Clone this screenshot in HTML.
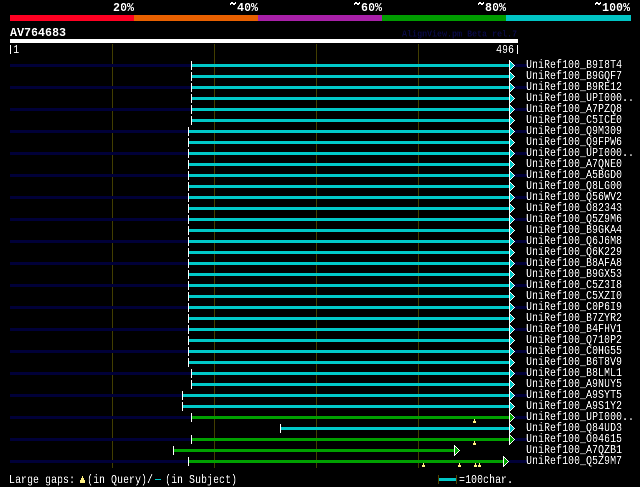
<!DOCTYPE html>
<html><head><meta charset="utf-8"><style>
html,body{margin:0;padding:0;background:#000;width:640px;height:487px;overflow:hidden}
svg{position:absolute;left:0;top:0}
.r,.b,.nv{position:absolute;white-space:pre;font-family:"Liberation Mono",monospace;color:#fff;line-height:24px;transform-origin:0 0;will-change:transform}
.r{font-size:24px;transform:scale(0.41667,0.5)}
.b{font-size:24px;font-weight:bold;transform:scale(0.48611,0.5)}
.nv{font-size:18px;font-weight:bold;color:#0a0a44;transform:scale(0.463,0.5)}
</style></head><body>
<svg width="640" height="487" shape-rendering="crispEdges">
<rect x="10" y="15" width="124" height="6" fill="#ff0022"/>
<rect x="134" y="15" width="124" height="6" fill="#e86000"/>
<rect x="258" y="15" width="124" height="6" fill="#a820a8"/>
<rect x="382" y="15" width="124" height="6" fill="#009c00"/>
<rect x="506" y="15" width="125" height="6" fill="#00c4c4"/>
<rect x="10" y="39" width="508" height="4" fill="#fff"/>
<rect x="112" y="44" width="1" height="424" fill="#423e00"/>
<rect x="214" y="44" width="1" height="424" fill="#423e00"/>
<rect x="316" y="44" width="1" height="424" fill="#423e00"/>
<rect x="418" y="44" width="1" height="424" fill="#423e00"/>
<rect x="10" y="64" width="517" height="3" fill="#000038"/>
<rect x="10" y="86" width="517" height="3" fill="#000038"/>
<rect x="10" y="108" width="517" height="3" fill="#000038"/>
<rect x="10" y="130" width="517" height="3" fill="#000038"/>
<rect x="10" y="152" width="517" height="3" fill="#000038"/>
<rect x="10" y="174" width="517" height="3" fill="#000038"/>
<rect x="10" y="196" width="517" height="3" fill="#000038"/>
<rect x="10" y="218" width="517" height="3" fill="#000038"/>
<rect x="10" y="240" width="517" height="3" fill="#000038"/>
<rect x="10" y="262" width="517" height="3" fill="#000038"/>
<rect x="10" y="284" width="517" height="3" fill="#000038"/>
<rect x="10" y="306" width="517" height="3" fill="#000038"/>
<rect x="10" y="328" width="517" height="3" fill="#000038"/>
<rect x="10" y="350" width="517" height="3" fill="#000038"/>
<rect x="10" y="372" width="517" height="3" fill="#000038"/>
<rect x="10" y="394" width="517" height="3" fill="#000038"/>
<rect x="10" y="416" width="517" height="3" fill="#000038"/>
<rect x="10" y="438" width="517" height="3" fill="#000038"/>
<rect x="10" y="460" width="517" height="3" fill="#000038"/>
<rect x="192" y="64" width="317" height="3" fill="#00c8c8"/>
<rect x="191" y="61" width="1" height="9" fill="#fff"/>
<path d="M509.5 60.5 L514.5 65.5 L509.5 70.5 Z" fill="#00c8c8" stroke="#fff" stroke-width="1"/>
<rect x="192" y="75" width="317" height="3" fill="#00c8c8"/>
<rect x="191" y="72" width="1" height="9" fill="#fff"/>
<path d="M509.5 71.5 L514.5 76.5 L509.5 81.5 Z" fill="#00c8c8" stroke="#fff" stroke-width="1"/>
<rect x="192" y="86" width="317" height="3" fill="#00c8c8"/>
<rect x="191" y="83" width="1" height="9" fill="#fff"/>
<path d="M509.5 82.5 L514.5 87.5 L509.5 92.5 Z" fill="#00c8c8" stroke="#fff" stroke-width="1"/>
<rect x="192" y="97" width="317" height="3" fill="#00c8c8"/>
<rect x="191" y="94" width="1" height="9" fill="#fff"/>
<path d="M509.5 93.5 L514.5 98.5 L509.5 103.5 Z" fill="#00c8c8" stroke="#fff" stroke-width="1"/>
<rect x="192" y="108" width="317" height="3" fill="#00c8c8"/>
<rect x="191" y="105" width="1" height="9" fill="#fff"/>
<path d="M509.5 104.5 L514.5 109.5 L509.5 114.5 Z" fill="#00c8c8" stroke="#fff" stroke-width="1"/>
<rect x="192" y="119" width="317" height="3" fill="#00c8c8"/>
<rect x="191" y="116" width="1" height="9" fill="#fff"/>
<path d="M509.5 115.5 L514.5 120.5 L509.5 125.5 Z" fill="#00c8c8" stroke="#fff" stroke-width="1"/>
<rect x="189" y="130" width="320" height="3" fill="#00c8c8"/>
<rect x="188" y="127" width="1" height="9" fill="#fff"/>
<path d="M509.5 126.5 L514.5 131.5 L509.5 136.5 Z" fill="#00c8c8" stroke="#fff" stroke-width="1"/>
<rect x="189" y="141" width="320" height="3" fill="#00c8c8"/>
<rect x="188" y="138" width="1" height="9" fill="#fff"/>
<path d="M509.5 137.5 L514.5 142.5 L509.5 147.5 Z" fill="#00c8c8" stroke="#fff" stroke-width="1"/>
<rect x="189" y="152" width="320" height="3" fill="#00c8c8"/>
<rect x="188" y="149" width="1" height="9" fill="#fff"/>
<path d="M509.5 148.5 L514.5 153.5 L509.5 158.5 Z" fill="#00c8c8" stroke="#fff" stroke-width="1"/>
<rect x="189" y="163" width="320" height="3" fill="#00c8c8"/>
<rect x="188" y="160" width="1" height="9" fill="#fff"/>
<path d="M509.5 159.5 L514.5 164.5 L509.5 169.5 Z" fill="#00c8c8" stroke="#fff" stroke-width="1"/>
<rect x="189" y="174" width="320" height="3" fill="#00c8c8"/>
<rect x="188" y="171" width="1" height="9" fill="#fff"/>
<path d="M509.5 170.5 L514.5 175.5 L509.5 180.5 Z" fill="#00c8c8" stroke="#fff" stroke-width="1"/>
<rect x="189" y="185" width="320" height="3" fill="#00c8c8"/>
<rect x="188" y="182" width="1" height="9" fill="#fff"/>
<path d="M509.5 181.5 L514.5 186.5 L509.5 191.5 Z" fill="#00c8c8" stroke="#fff" stroke-width="1"/>
<rect x="189" y="196" width="320" height="3" fill="#00c8c8"/>
<rect x="188" y="193" width="1" height="9" fill="#fff"/>
<path d="M509.5 192.5 L514.5 197.5 L509.5 202.5 Z" fill="#00c8c8" stroke="#fff" stroke-width="1"/>
<rect x="189" y="207" width="320" height="3" fill="#00c8c8"/>
<rect x="188" y="204" width="1" height="9" fill="#fff"/>
<path d="M509.5 203.5 L514.5 208.5 L509.5 213.5 Z" fill="#00c8c8" stroke="#fff" stroke-width="1"/>
<rect x="189" y="218" width="320" height="3" fill="#00c8c8"/>
<rect x="188" y="215" width="1" height="9" fill="#fff"/>
<path d="M509.5 214.5 L514.5 219.5 L509.5 224.5 Z" fill="#00c8c8" stroke="#fff" stroke-width="1"/>
<rect x="189" y="229" width="320" height="3" fill="#00c8c8"/>
<rect x="188" y="226" width="1" height="9" fill="#fff"/>
<path d="M509.5 225.5 L514.5 230.5 L509.5 235.5 Z" fill="#00c8c8" stroke="#fff" stroke-width="1"/>
<rect x="189" y="240" width="320" height="3" fill="#00c8c8"/>
<rect x="188" y="237" width="1" height="9" fill="#fff"/>
<path d="M509.5 236.5 L514.5 241.5 L509.5 246.5 Z" fill="#00c8c8" stroke="#fff" stroke-width="1"/>
<rect x="189" y="251" width="320" height="3" fill="#00c8c8"/>
<rect x="188" y="248" width="1" height="9" fill="#fff"/>
<path d="M509.5 247.5 L514.5 252.5 L509.5 257.5 Z" fill="#00c8c8" stroke="#fff" stroke-width="1"/>
<rect x="189" y="262" width="320" height="3" fill="#00c8c8"/>
<rect x="188" y="259" width="1" height="9" fill="#fff"/>
<path d="M509.5 258.5 L514.5 263.5 L509.5 268.5 Z" fill="#00c8c8" stroke="#fff" stroke-width="1"/>
<rect x="189" y="273" width="320" height="3" fill="#00c8c8"/>
<rect x="188" y="270" width="1" height="9" fill="#fff"/>
<path d="M509.5 269.5 L514.5 274.5 L509.5 279.5 Z" fill="#00c8c8" stroke="#fff" stroke-width="1"/>
<rect x="189" y="284" width="320" height="3" fill="#00c8c8"/>
<rect x="188" y="281" width="1" height="9" fill="#fff"/>
<path d="M509.5 280.5 L514.5 285.5 L509.5 290.5 Z" fill="#00c8c8" stroke="#fff" stroke-width="1"/>
<rect x="189" y="295" width="320" height="3" fill="#00c8c8"/>
<rect x="188" y="292" width="1" height="9" fill="#fff"/>
<path d="M509.5 291.5 L514.5 296.5 L509.5 301.5 Z" fill="#00c8c8" stroke="#fff" stroke-width="1"/>
<rect x="189" y="306" width="320" height="3" fill="#00c8c8"/>
<rect x="188" y="303" width="1" height="9" fill="#fff"/>
<path d="M509.5 302.5 L514.5 307.5 L509.5 312.5 Z" fill="#00c8c8" stroke="#fff" stroke-width="1"/>
<rect x="189" y="317" width="320" height="3" fill="#00c8c8"/>
<rect x="188" y="314" width="1" height="9" fill="#fff"/>
<path d="M509.5 313.5 L514.5 318.5 L509.5 323.5 Z" fill="#00c8c8" stroke="#fff" stroke-width="1"/>
<rect x="189" y="328" width="320" height="3" fill="#00c8c8"/>
<rect x="188" y="325" width="1" height="9" fill="#fff"/>
<path d="M509.5 324.5 L514.5 329.5 L509.5 334.5 Z" fill="#00c8c8" stroke="#fff" stroke-width="1"/>
<rect x="189" y="339" width="320" height="3" fill="#00c8c8"/>
<rect x="188" y="336" width="1" height="9" fill="#fff"/>
<path d="M509.5 335.5 L514.5 340.5 L509.5 345.5 Z" fill="#00c8c8" stroke="#fff" stroke-width="1"/>
<rect x="189" y="350" width="320" height="3" fill="#00c8c8"/>
<rect x="188" y="347" width="1" height="9" fill="#fff"/>
<path d="M509.5 346.5 L514.5 351.5 L509.5 356.5 Z" fill="#00c8c8" stroke="#fff" stroke-width="1"/>
<rect x="189" y="361" width="320" height="3" fill="#00c8c8"/>
<rect x="188" y="358" width="1" height="9" fill="#fff"/>
<path d="M509.5 357.5 L514.5 362.5 L509.5 367.5 Z" fill="#00c8c8" stroke="#fff" stroke-width="1"/>
<rect x="192" y="372" width="317" height="3" fill="#00c8c8"/>
<rect x="191" y="369" width="1" height="9" fill="#fff"/>
<path d="M509.5 368.5 L514.5 373.5 L509.5 378.5 Z" fill="#00c8c8" stroke="#fff" stroke-width="1"/>
<rect x="192" y="383" width="317" height="3" fill="#00c8c8"/>
<rect x="191" y="380" width="1" height="9" fill="#fff"/>
<path d="M509.5 379.5 L514.5 384.5 L509.5 389.5 Z" fill="#00c8c8" stroke="#fff" stroke-width="1"/>
<rect x="183" y="394" width="326" height="3" fill="#00c8c8"/>
<rect x="182" y="391" width="1" height="9" fill="#fff"/>
<path d="M509.5 390.5 L514.5 395.5 L509.5 400.5 Z" fill="#00c8c8" stroke="#fff" stroke-width="1"/>
<rect x="183" y="405" width="326" height="3" fill="#00c8c8"/>
<rect x="182" y="402" width="1" height="9" fill="#fff"/>
<path d="M509.5 401.5 L514.5 406.5 L509.5 411.5 Z" fill="#00c8c8" stroke="#fff" stroke-width="1"/>
<rect x="192" y="416" width="317" height="3" fill="#00a000"/>
<rect x="191" y="413" width="1" height="9" fill="#fff"/>
<path d="M509.5 412.5 L514.5 417.5 L509.5 422.5 Z" fill="#00a000" stroke="#fff" stroke-width="1"/>
<rect x="474" y="419" width="1" height="2" fill="#fff080"/><rect x="473" y="421" width="3" height="2" fill="#fff080"/>
<rect x="281" y="427" width="228" height="3" fill="#00c8c8"/>
<rect x="280" y="424" width="1" height="9" fill="#fff"/>
<path d="M509.5 423.5 L514.5 428.5 L509.5 433.5 Z" fill="#00c8c8" stroke="#fff" stroke-width="1"/>
<rect x="192" y="438" width="317" height="3" fill="#00a000"/>
<rect x="191" y="435" width="1" height="9" fill="#fff"/>
<path d="M509.5 434.5 L514.5 439.5 L509.5 444.5 Z" fill="#00a000" stroke="#fff" stroke-width="1"/>
<rect x="474" y="441" width="1" height="2" fill="#fff080"/><rect x="473" y="443" width="3" height="2" fill="#fff080"/>
<rect x="174" y="449" width="280" height="3" fill="#00a000"/>
<rect x="173" y="446" width="1" height="9" fill="#fff"/>
<path d="M454.5 445.5 L459.5 450.5 L454.5 455.5 Z" fill="#00a000" stroke="#fff" stroke-width="1"/>
<rect x="189" y="460" width="314" height="3" fill="#00a000"/>
<rect x="188" y="457" width="1" height="9" fill="#fff"/>
<path d="M503.5 456.5 L508.5 461.5 L503.5 466.5 Z" fill="#00a000" stroke="#fff" stroke-width="1"/>
<rect x="423" y="463" width="1" height="2" fill="#fff080"/><rect x="422" y="465" width="3" height="2" fill="#fff080"/>
<rect x="459" y="463" width="1" height="2" fill="#fff080"/><rect x="458" y="465" width="3" height="2" fill="#fff080"/>
<rect x="475" y="463" width="1" height="2" fill="#fff080"/><rect x="474" y="465" width="3" height="2" fill="#fff080"/>
<rect x="479" y="463" width="1" height="2" fill="#fff080"/><rect x="478" y="465" width="3" height="2" fill="#fff080"/>
<rect x="82" y="476" width="1" height="2" fill="#fff080"/><rect x="81" y="478" width="3" height="2" fill="#fff080"/><rect x="80" y="480" width="5" height="3" fill="#fff080"/>
<rect x="155" y="479" width="6" height="1" fill="#00c8c8"/>
<rect x="438" y="475" width="1" height="9" fill="#4e4200"/><rect x="456" y="475" width="1" height="9" fill="#4e4200"/>
<rect x="439" y="478" width="17" height="3" fill="#00c8c8"/>
<rect x="231" y="2" width="1" height="1" fill="#fff"/>
<rect x="232" y="2" width="1" height="1" fill="#fff"/>
<rect x="235" y="2" width="1" height="1" fill="#fff"/>
<rect x="230" y="3" width="1" height="1" fill="#fff"/>
<rect x="231" y="3" width="1" height="1" fill="#fff"/>
<rect x="232" y="3" width="1" height="1" fill="#fff"/>
<rect x="233" y="3" width="1" height="1" fill="#fff"/>
<rect x="234" y="3" width="1" height="1" fill="#fff"/>
<rect x="235" y="3" width="1" height="1" fill="#fff"/>
<rect x="230" y="4" width="1" height="1" fill="#fff"/>
<rect x="233" y="4" width="1" height="1" fill="#fff"/>
<rect x="234" y="4" width="1" height="1" fill="#fff"/>
<rect x="355" y="2" width="1" height="1" fill="#fff"/>
<rect x="356" y="2" width="1" height="1" fill="#fff"/>
<rect x="359" y="2" width="1" height="1" fill="#fff"/>
<rect x="354" y="3" width="1" height="1" fill="#fff"/>
<rect x="355" y="3" width="1" height="1" fill="#fff"/>
<rect x="356" y="3" width="1" height="1" fill="#fff"/>
<rect x="357" y="3" width="1" height="1" fill="#fff"/>
<rect x="358" y="3" width="1" height="1" fill="#fff"/>
<rect x="359" y="3" width="1" height="1" fill="#fff"/>
<rect x="354" y="4" width="1" height="1" fill="#fff"/>
<rect x="357" y="4" width="1" height="1" fill="#fff"/>
<rect x="358" y="4" width="1" height="1" fill="#fff"/>
<rect x="479" y="2" width="1" height="1" fill="#fff"/>
<rect x="480" y="2" width="1" height="1" fill="#fff"/>
<rect x="483" y="2" width="1" height="1" fill="#fff"/>
<rect x="478" y="3" width="1" height="1" fill="#fff"/>
<rect x="479" y="3" width="1" height="1" fill="#fff"/>
<rect x="480" y="3" width="1" height="1" fill="#fff"/>
<rect x="481" y="3" width="1" height="1" fill="#fff"/>
<rect x="482" y="3" width="1" height="1" fill="#fff"/>
<rect x="483" y="3" width="1" height="1" fill="#fff"/>
<rect x="478" y="4" width="1" height="1" fill="#fff"/>
<rect x="481" y="4" width="1" height="1" fill="#fff"/>
<rect x="482" y="4" width="1" height="1" fill="#fff"/>
<rect x="596" y="2" width="1" height="1" fill="#fff"/>
<rect x="597" y="2" width="1" height="1" fill="#fff"/>
<rect x="600" y="2" width="1" height="1" fill="#fff"/>
<rect x="595" y="3" width="1" height="1" fill="#fff"/>
<rect x="596" y="3" width="1" height="1" fill="#fff"/>
<rect x="597" y="3" width="1" height="1" fill="#fff"/>
<rect x="598" y="3" width="1" height="1" fill="#fff"/>
<rect x="599" y="3" width="1" height="1" fill="#fff"/>
<rect x="600" y="3" width="1" height="1" fill="#fff"/>
<rect x="595" y="4" width="1" height="1" fill="#fff"/>
<rect x="598" y="4" width="1" height="1" fill="#fff"/>
<rect x="599" y="4" width="1" height="1" fill="#fff"/>
<rect x="10" y="45" width="1" height="9" fill="#fff"/>
<rect x="517" y="45" width="1" height="9" fill="#fff"/>
</svg>
<div class="b" style="left:113px;top:2px">20%</div>
<div class="b" style="left:237px;top:2px">40%</div>
<div class="b" style="left:361px;top:2px">60%</div>
<div class="b" style="left:485px;top:2px">80%</div>
<div class="b" style="left:602px;top:2px">100%</div>
<div class="b" style="left:10px;top:27px">AV764683</div>
<div class="nv" style="left:402px;top:28px">AlignView.pm Beta rel.7</div>
<div class="r" style="left:7px;top:44px"> 1</div>
<div class="r" style="left:496px;top:44px">496</div>
<div class="r" style="left:526px;top:59px">UniRef100_B9I8T4</div>
<div class="r" style="left:526px;top:70px">UniRef100_B9GQF7</div>
<div class="r" style="left:526px;top:81px">UniRef100_B9RE12</div>
<div class="r" style="left:526px;top:92px">UniRef100_UPI000..</div>
<div class="r" style="left:526px;top:103px">UniRef100_A7PZQ8</div>
<div class="r" style="left:526px;top:114px">UniRef100_C5ICE0</div>
<div class="r" style="left:526px;top:125px">UniRef100_Q9M309</div>
<div class="r" style="left:526px;top:136px">UniRef100_Q9FPW6</div>
<div class="r" style="left:526px;top:147px">UniRef100_UPI000..</div>
<div class="r" style="left:526px;top:158px">UniRef100_A7QNE0</div>
<div class="r" style="left:526px;top:169px">UniRef100_A5BGD0</div>
<div class="r" style="left:526px;top:180px">UniRef100_Q8LG00</div>
<div class="r" style="left:526px;top:191px">UniRef100_Q56WV2</div>
<div class="r" style="left:526px;top:202px">UniRef100_O82343</div>
<div class="r" style="left:526px;top:213px">UniRef100_Q5Z9M6</div>
<div class="r" style="left:526px;top:224px">UniRef100_B9GKA4</div>
<div class="r" style="left:526px;top:235px">UniRef100_Q6J6M8</div>
<div class="r" style="left:526px;top:246px">UniRef100_Q6K229</div>
<div class="r" style="left:526px;top:257px">UniRef100_B8AFA8</div>
<div class="r" style="left:526px;top:268px">UniRef100_B9GX53</div>
<div class="r" style="left:526px;top:279px">UniRef100_C5Z3I8</div>
<div class="r" style="left:526px;top:290px">UniRef100_C5XZI0</div>
<div class="r" style="left:526px;top:301px">UniRef100_C0P6I9</div>
<div class="r" style="left:526px;top:312px">UniRef100_B7ZYR2</div>
<div class="r" style="left:526px;top:323px">UniRef100_B4FHV1</div>
<div class="r" style="left:526px;top:334px">UniRef100_Q710P2</div>
<div class="r" style="left:526px;top:345px">UniRef100_C0HG55</div>
<div class="r" style="left:526px;top:356px">UniRef100_B6T8V9</div>
<div class="r" style="left:526px;top:367px">UniRef100_B8LML1</div>
<div class="r" style="left:526px;top:378px">UniRef100_A9NUY5</div>
<div class="r" style="left:526px;top:389px">UniRef100_A9SYT5</div>
<div class="r" style="left:526px;top:400px">UniRef100_A9S1Y2</div>
<div class="r" style="left:526px;top:411px">UniRef100_UPI000..</div>
<div class="r" style="left:526px;top:422px">UniRef100_Q84UD3</div>
<div class="r" style="left:526px;top:433px">UniRef100_O04615</div>
<div class="r" style="left:526px;top:444px">UniRef100_A7QZB1</div>
<div class="r" style="left:526px;top:455px">UniRef100_Q5Z9M7</div>
<div class="r" style="left:9px;top:474px">Large gaps:</div>
<div class="r" style="left:87px;top:474px">(in Query)/</div>
<div class="r" style="left:165px;top:474px">(in Subject)</div>
<div class="r" style="left:459px;top:474px">=100char.</div>
</body></html>
